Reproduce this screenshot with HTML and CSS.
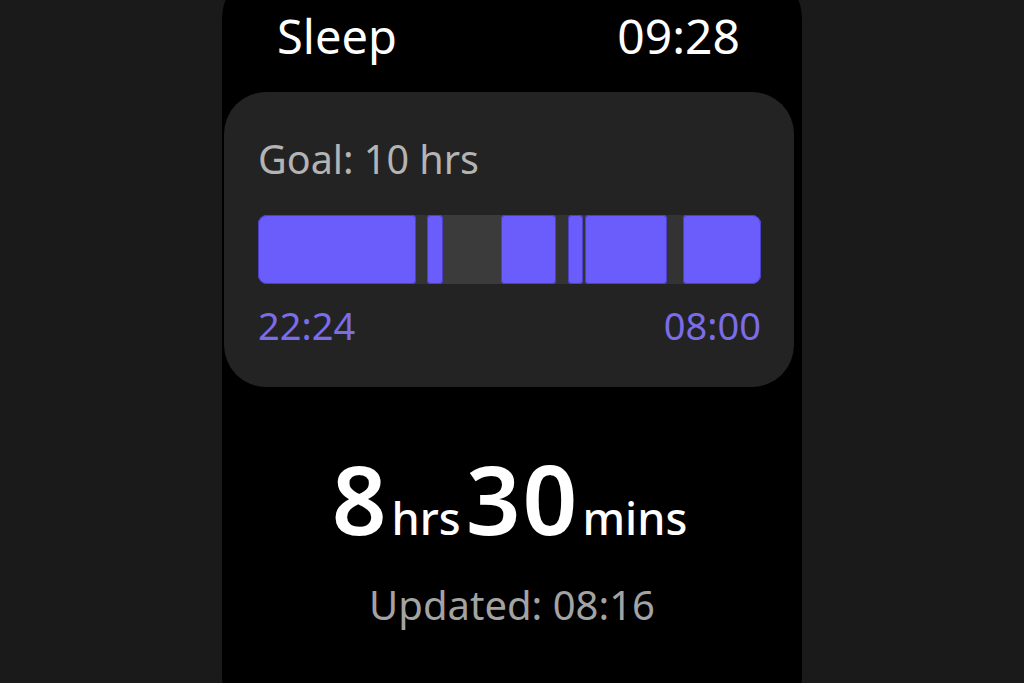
FILE: index.html
```html
<!DOCTYPE html>
<html lang="en">
<head>
<meta charset="utf-8">
<title>Sleep</title>
<link rel="stylesheet" href="styles.css">
</head>
<body>
<div class="screen">
  <header class="header">
    <span class="title">Sleep</span>
    <span class="clock">09:28</span>
  </header>
  <section class="card">
    <div class="goal">Goal: 10 hrs</div>
    <div class="bar">
      <span class="seg sleep first" style="width:158px"></span>
      <span class="seg gap" style="width:11px"></span>
      <span class="seg sleep" style="width:16px"></span>
      <span class="seg awake" style="width:58px"></span>
      <span class="seg sleep" style="width:55px"></span>
      <span class="seg gap" style="width:12px"></span>
      <span class="seg sleep" style="width:15px"></span>
      <span class="seg gap" style="width:2px"></span>
      <span class="seg sleep" style="width:82px"></span>
      <span class="seg gap" style="width:16px"></span>
      <span class="seg sleep last" style="width:78px"></span>
    </div>
    <div class="times">
      <span>22:24</span>
      <span>08:00</span>
    </div>
  </section>
  <div class="total">
    <span class="num">8</span><span class="unit">hrs</span><span class="num">30</span><span class="unit">mins</span>
  </div>
  <div class="updated">Updated: 08:16</div>
</div>
</body>
</html>
```
FILE: styles.css
```css
html, body {
  margin: 0;
  padding: 0;
  height: 100%;
}
body {
  background: #1a1a1a;
  overflow: hidden;
  display: flex;
  justify-content: center;
  font-family: "Noto Sans", Roboto, sans-serif;
}
.screen {
  width: 580px;
  height: 775px;
  margin-top: -40px;
  background: #000;
  border-radius: 60px;
  display: flex;
  flex-direction: column;
  box-sizing: border-box;
  padding-top: 50px;
}
.header {
  display: flex;
  justify-content: space-between;
  align-items: baseline;
  padding: 0 62px 0 55px;
  color: #fff;
  line-height: 52px;
}
.title {
  font-size: 47px;
}
.clock {
  font-size: 48px;
}
.card {
  margin: 30px 8px 0 2px;
  height: 295px;
  box-sizing: border-box;
  background: #232323;
  border-radius: 42px;
  padding: 45px 33px 0 34px;
}
.goal {
  color: #b4b4b4;
  font-size: 39.5px;
  line-height: 44px;
}
.bar {
  margin-top: 34px;
  height: 69px;
  display: flex;
  background: #333;
  border-radius: 9px;
}
.seg {
  height: 100%;
  flex: none;
  box-sizing: border-box;
}
.seg.sleep {
  background: #6a5dfb;
  border-radius: 4px;
  box-shadow: inset 0 0 0 1px #4c40c9;
}
.seg.first {
  border-radius: 9px 4px 4px 9px;
}
.seg.last {
  border-radius: 4px 9px 9px 4px;
}
.seg.gap {
  background: #333;
}
.seg.awake {
  background: #3b3b3b;
}
.times {
  display: flex;
  justify-content: space-between;
  color: #7b6ce8;
  font-size: 38px;
  line-height: 40px;
  margin-top: 21px;
}
.total {
  display: flex;
  justify-content: center;
  align-items: baseline;
  color: #fff;
  margin-top: 61px;
  line-height: 100px;
}
.num {
  font-size: 96px;
  font-weight: 600;
  letter-spacing: 2px;
}
.unit {
  font-size: 45px;
  font-weight: 500;
  margin: 0 5px 0 3px;
}
.updated {
  text-align: center;
  color: #a3a3a3;
  font-size: 40px;
  line-height: 44px;
  margin-top: 15px;
}
```
